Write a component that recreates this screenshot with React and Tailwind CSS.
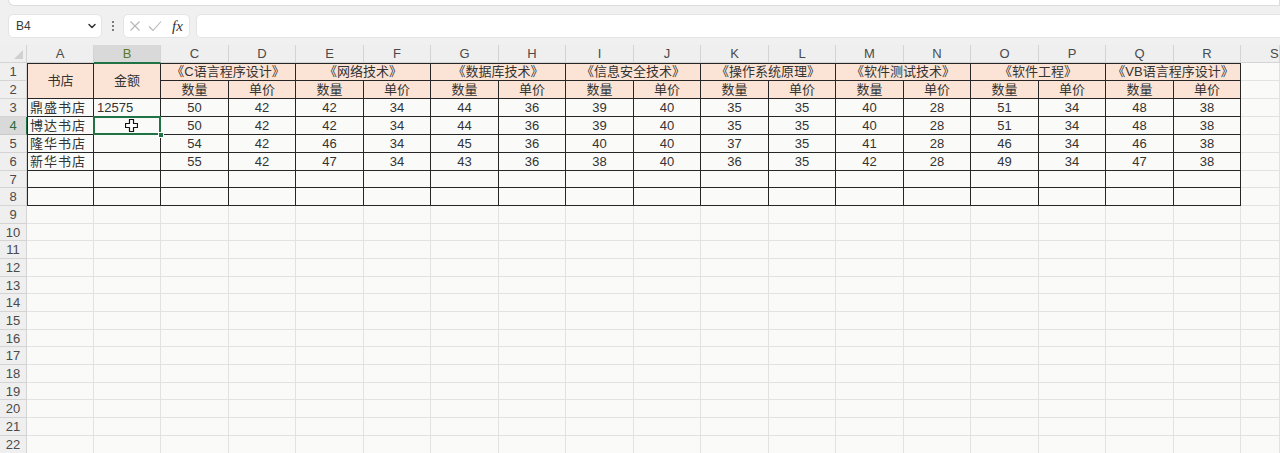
import React from "react";

const COLS = ["A", "B", "C", "D", "E", "F", "G", "H", "I", "J", "K", "L", "M", "N", "O", "P", "Q", "R", "S"];
const COURSES = [
  "《C语言程序设计》",
  "《网络技术》",
  "《数据库技术》",
  "《信息安全技术》",
  "《操作系统原理》",
  "《软件测试技术》",
  "《软件工程》",
  "《VB语言程序设计》",
];
const STORES = ["鼎盛书店", "博达书店", "隆华书店", "新华书店"];
const DATA = [
  [50, 42, 42, 34, 44, 36, 39, 40, 35, 35, 40, 28, 51, 34, 48, 38],
  [50, 42, 42, 34, 44, 36, 39, 40, 35, 35, 40, 28, 51, 34, 48, 38],
  [54, 42, 46, 34, 45, 36, 40, 40, 37, 35, 41, 28, 46, 34, 46, 38],
  [55, 42, 47, 34, 43, 36, 38, 40, 36, 35, 42, 28, 49, 34, 47, 38],
];

const grid = "border-r border-b border-[#e2e2e2]";
const black = "border-r border-b border-[#262626]";
const peach = "bg-[#fbe4d6]";

function RowHead({ n, active }) {
  return (
    <div
      className={`flex items-center justify-center border-b border-r text-[13px] leading-none ${
        active
          ? "bg-[#d9d9d9] text-[#2b6b3e] border-r-[#217346] border-b-[#c9c9c9]"
          : "bg-[#efefef] text-[#4a4a4a] border-[#d4d4d4]"
      }`}
    >
      {n}
    </div>
  );
}

function Cursor() {
  return (
    <svg className="absolute left-[31px] top-[2px] z-20" width="13" height="13" viewBox="0 0 13 13">
      <path
        d="M4.5 0.5h4v4h4v4h-4v4h-4v-4h-4v-4h4z"
        fill="#fff"
        stroke="#111"
        strokeWidth="1.2"
        strokeLinejoin="round"
      />
    </svg>
  );
}

function Sheet() {
  const cells = [];
  // column header row
  cells.push(
    <div key="corner" className="relative bg-[#efefef] border-r border-b border-[#d4d4d4]">
      <div className="absolute right-[3px] bottom-[3px] w-0 h-0 border-l-[9px] border-l-transparent border-b-[9px] border-b-[#d0d0d0]" />
    </div>
  );
  COLS.forEach((c) => {
    cells.push(
      <div
        key={"h" + c}
        className={`flex items-center justify-center text-[13px] leading-none border-r border-b ${
          c === "B"
            ? "bg-[#d9d9d9] text-[#5a7a2a] border-r-[#d4d4d4] border-b-[#217346]"
            : "bg-[#efefef] text-[#4a4a4a] border-[#d4d4d4]"
        } ${c === "S" ? "justify-start pl-[29px]" : ""}`}
      >
        {c}
      </div>
    );
  });

  // row 1
  cells.push(<RowHead key="r1" n={1} />);
  cells.push(
    <div key="a1" className={`row-span-2 flex items-center justify-center text-[13px] border-t border-l ${black} ${peach}`}>
      书店
    </div>
  );
  cells.push(
    <div key="b1" className={`row-span-2 flex items-center justify-center text-[13px] border-t border-t-[#217346] ${black} ${peach}`}>
      金额
    </div>
  );
  COURSES.forEach((t, i) => {
    cells.push(
      <div key={"c1" + i} className={`col-span-2 flex items-center justify-center text-[13px] whitespace-nowrap border-t ${black} ${peach}`}>
        {t}
      </div>
    );
  });
  cells.push(<div key="s1" className={grid} />);

  // row 2
  cells.push(<RowHead key="r2" n={2} />);
  for (let i = 0; i < 16; i++) {
    cells.push(
      <div key={"c2" + i} className={`flex items-center justify-center text-[13px] ${black} ${peach}`}>
        {i % 2 === 0 ? "数量" : "单价"}
      </div>
    );
  }
  cells.push(<div key="s2" className={grid} />);

  // rows 3-8
  for (let r = 3; r <= 8; r++) {
    const d = DATA[r - 3];
    cells.push(<RowHead key={"r" + r} n={r} active={r === 4} />);
    cells.push(
      <div key={"a" + r} className={`flex items-center pl-[2px] text-[13px] tracking-[1px] border-l ${black}`}>
        {d ? STORES[r - 3] : ""}
      </div>
    );
    cells.push(
      <div key={"b" + r} className={`relative flex items-center pl-[3px] text-[13px] ${black}`}>
        {r === 3 ? "12575" : ""}
        {r === 4 ? (
          <>
            <div className="absolute -left-[1px] -top-[1px] -right-[1px] -bottom-[1px] border-2 border-[#217346] z-10" />
            <div className="absolute -right-[4px] -bottom-[4px] w-[6px] h-[6px] bg-[#217346] border border-white z-20" />
            <Cursor />
          </>
        ) : null}
      </div>
    );
    for (let i = 0; i < 16; i++) {
      cells.push(
        <div key={"v" + r + i} className={`flex items-center justify-center text-[13px] ${black}`}>
          {d ? d[i] : ""}
        </div>
      );
    }
    cells.push(<div key={"s" + r} className={grid} />);
  }

  // rows 9-22
  for (let r = 9; r <= 22; r++) {
    cells.push(<RowHead key={"r" + r} n={r} />);
    for (let i = 0; i < 19; i++) {
      cells.push(<div key={"e" + r + i} className={grid} />);
    }
  }

  return (
    <div className="grid grid-cols-[27px_67px_67px_68px_67px_68px_67px_68px_67px_68px_67px_68px_67px_68px_67px_68px_67px_68px_67px_1fr] grid-rows-[18px_18px_18px_18px_18px_18px_18px_17px_18px_18px_17px_18px_18px_17px_18px_18px_17px_18px_18px_17px_18px_18px_18px] bg-[#fafbf8] text-[#333]">
      {cells}
    </div>
  );
}

export default function App() {
  return (
    <div className="w-[1280px] h-[453px] overflow-hidden bg-[#f0f0f0] font-['Liberation_Sans','Noto_Sans_CJK_SC',sans-serif]">
      <div className="h-[7px] pl-[8px]">
        <div className="h-[6px] bg-white border border-t-0 border-[#dcdcdc] rounded-bl-[6px]" />
      </div>
      <div className="h-[38px] flex items-start pt-[7px]">
        <div className="ml-[8px] w-[94px] h-[24px] bg-white rounded-[5px] border border-[#e4e4e4] flex items-center justify-between pl-[7px] pr-[4px]">
          <span className="text-[12px] text-[#3a3a3a]">B4</span>
          <svg width="10" height="10" viewBox="0 0 10 10">
            <path d="M2 3.5l3 3 3-3" fill="none" stroke="#333" strokeWidth="1.5" strokeLinecap="round" strokeLinejoin="round" />
          </svg>
        </div>
        <div className="w-[21px] h-[24px] flex flex-col items-center justify-center gap-[2px]">
          <span className="w-[2px] h-[2px] bg-[#555] rounded-full" />
          <span className="w-[2px] h-[2px] bg-[#555] rounded-full" />
          <span className="w-[2px] h-[2px] bg-[#555] rounded-full" />
        </div>
        <div className="w-[67px] h-[24px] bg-white rounded-[5px] border border-[#e4e4e4] flex items-center pl-[4px]">
          <svg width="12" height="12" viewBox="0 0 12 12" className="ml-[1px]">
            <path d="M1.5 1.5l9 9M10.5 1.5l-9 9" stroke="#b5b5b5" strokeWidth="1.1" />
          </svg>
          <svg width="14" height="12" viewBox="0 0 14 12" className="ml-[7px]">
            <path d="M1 6.5l4 4 8-9" fill="none" stroke="#b5b5b5" strokeWidth="1.1" />
          </svg>
          <span className="ml-[10px] text-[15px] italic font-['Liberation_Serif',serif] text-[#333] leading-none">fx</span>
        </div>
        <div className="ml-[6px] flex-1 h-[24px] bg-white rounded-l-[5px] border border-r-0 border-[#e4e4e4]" />
      </div>
      <Sheet />
    </div>
  );
}
